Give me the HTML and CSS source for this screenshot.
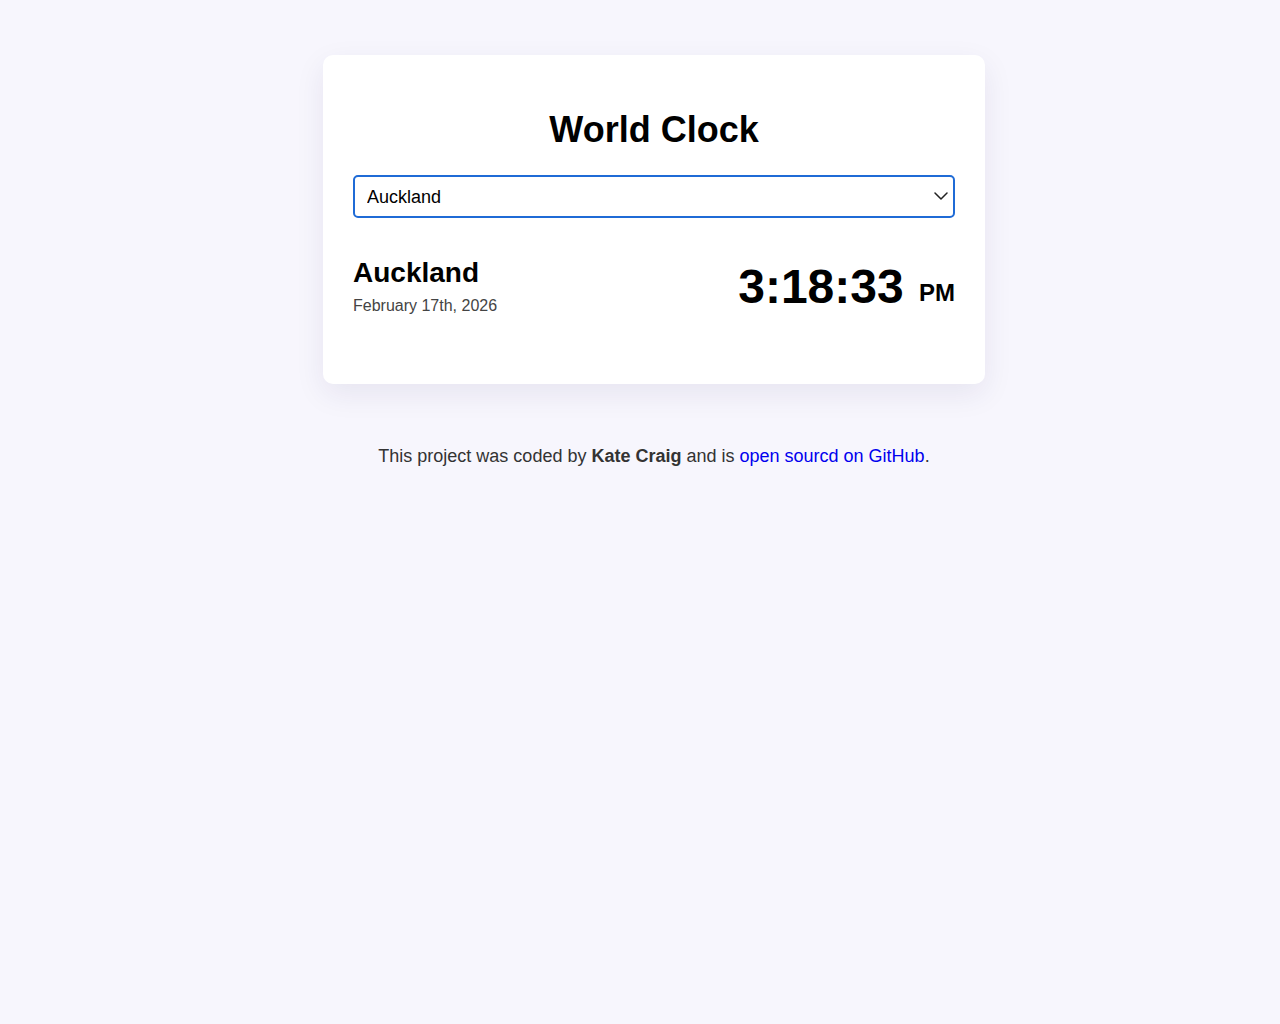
FILE: index.html
```html
<!DOCTYPE html>
<html lang="en">
  <head>
    <meta charset="UTF-8" />
    <meta name="viewport" content="width=device-width, initial-scale=1.0" />
    <title>World Clock</title>
    <link rel="stylesheet" href="styles.css">
  </head>
  <body>
    <div class="container">
      <div class="card">
        <h1>World Clock</h1>
        <div class="select-wrap">
          <select id="city">
            <option value="Pacific/Auckland">Auckland</option>
            <option value="Europe/London">London</option>
            <option value="America/New_York">New York</option>
            <option value="Asia/Tokyo">Tokyo</option>
          </select>
          <svg class="chevron" width="14" height="8" viewBox="0 0 14 8">
            <path d="M1 1l6 6 6-6" fill="none" stroke="#222" stroke-width="1.5" stroke-linecap="round" stroke-linejoin="round" />
          </svg>
        </div>
        <div class="city-row">
          <div>
            <h2 class="city-name">Auckland</h2>
            <div class="date">February 17th, 2026</div>
          </div>
          <div class="time">3:18:33 <small>PM</small></div>
        </div>
      </div>
      <footer>
        This project was coded by <strong>Kate Craig</strong> and is
        <a href="#">open sourcd on GitHub</a>.
      </footer>
    </div>
  </body>
</html>
```

FILE: styles.css
```css
body {
  margin: 0;
  font-family: "Liberation Sans", Arial, sans-serif;
  background-color: #f7f6fd;
  color: #000;
}
.container {
  width: 662px;
  margin: 0 auto;
  padding: 55px 0 0 28px;
}
.card {
  background: #ffffff;
  border-radius: 10px;
  padding: 54px 30px 69px;
  box-shadow: 0 10px 30px rgba(40, 30, 90, 0.08);
}
h1 {
  margin: 0;
  text-align: center;
  font-size: 36px;
  font-weight: bold;
}
.select-wrap {
  position: relative;
  margin-top: 24px;
}
select {
  display: block;
  box-sizing: border-box;
  width: 100%;
  height: 43px;
  padding: 0 12px;
  font-family: "Liberation Sans", Arial, sans-serif;
  font-size: 18px;
  color: #000;
  background: #fff;
  border: 2px solid #1f6bd6;
  border-radius: 5px;
  appearance: none;
  -webkit-appearance: none;
  outline: none;
}
.chevron {
  position: absolute;
  right: 7px;
  top: 17px;
  pointer-events: none;
}
.city-row {
  display: flex;
  justify-content: space-between;
  align-items: center;
  margin-top: 39px;
}
.city-name {
  margin: 0;
  font-size: 28px;
  font-weight: bold;
}
.date {
  margin-top: 8px;
  font-size: 16px;
  color: #444;
}
.time {
  font-size: 48px;
  font-weight: bold;
}
.time small {
  font-size: 24px;
  margin-left: 2px;
  vertical-align: 2px;
}
footer {
  margin-top: 62px;
  text-align: center;
  font-size: 18px;
  color: #333;
}
footer a {
  color: #0000ee;
  text-decoration: none;
}
```
